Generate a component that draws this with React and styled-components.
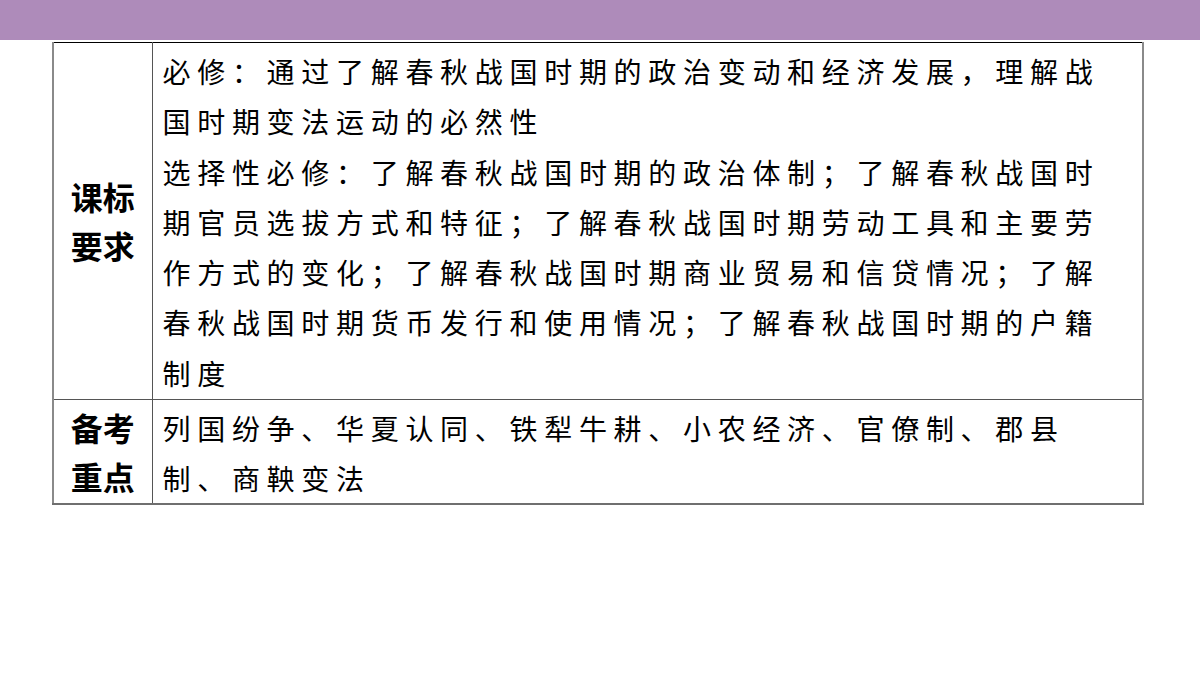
import React from "react";
import styled, { createGlobalStyle } from "styled-components";

const GlobalStyle = createGlobalStyle`
  html, body {
    margin: 0;
    padding: 0;
    background: #ffffff;
  }
  body {
    font-family: "Noto Sans CJK SC", "Noto Sans", sans-serif;
    color: #000;
  }
`;

const rows = [
  {
    head: ["课标", "要求"],
    height: 357,
    lines: [
      "必修：通过了解春秋战国时期的政治变动和经济发展，理解战国时期变法运动的必然性",
      "选择性必修：了解春秋战国时期的政治体制；了解春秋战国时期官员选拔方式和特征；了解春秋战国时期劳动工具和主要劳作方式的变化；了解春秋战国时期商业贸易和信贷情况；了解春秋战国时期货币发行和使用情况；了解春秋战国时期的户籍制度",
    ],
  },
  {
    head: ["备考", "重点"],
    height: 102,
    lines: ["列国纷争、华夏认同、铁犁牛耕、小农经济、官僚制、郡县制、商鞅变法"],
  },
];

const App = () => {
  return (
    <>
      <GlobalStyle />
      <Page>
        <TopBar />
        <Table>
          <colgroup>
            <col style={{ width: 99 }} />
            <col />
          </colgroup>
          <tbody>
            {rows.map((row, i) => (
              <Row key={i} $h={row.height}>
                <HeadCell $first={i === 0}>
                  {row.head.map((h) => (
                    <span key={h}>{h}</span>
                  ))}
                </HeadCell>
                <BodyCell $first={i === 0}>
                  {row.lines.map((l, j) => (
                    <p key={j}>{l}</p>
                  ))}
                </BodyCell>
              </Row>
            ))}
          </tbody>
        </Table>
      </Page>
    </>
  );
};

const Page = styled.div`
  width: 1200px;
  height: 675px;
  background: #fff;
  overflow: hidden;
`;

const TopBar = styled.div`
  height: 40px;
  background: #ae8bba;
`;

const Table = styled.table`
  margin: 2px 0 0 52px;
  width: 1092px;
  table-layout: fixed;
  border-collapse: collapse;
  border-top: 1px solid #000;
  border-left: 2px solid #8a8a8a;
  border-right: 2px solid #8a8a8a;
  border-bottom: 2px solid #6f6f6f;
`;

const Row = styled.tr`
  height: ${(p) => p.$h}px;
`;

const HeadCell = styled.td`
  padding: 0;
  border-right: 1px solid #555;
  border-top: ${(p) => (p.$first ? "none" : "1px solid #555")};
  vertical-align: middle;
  text-align: center;
  font-size: 32px;
  font-weight: 700;
  line-height: 49px;

  span {
    display: block;
  }
`;

const BodyCell = styled.td`
  padding: ${(p) => (p.$first ? "3px" : "3px")} 36px 0 10px;
  border-top: ${(p) => (p.$first ? "none" : "1px solid #555")};
  vertical-align: top;
  font-size: 28px;
  font-weight: 400;
  letter-spacing: 6.7px;
  line-height: ${(p) => (p.$first ? "50.3px" : "50px")};

  p {
    margin: 0;
  }
`;

export default App;
